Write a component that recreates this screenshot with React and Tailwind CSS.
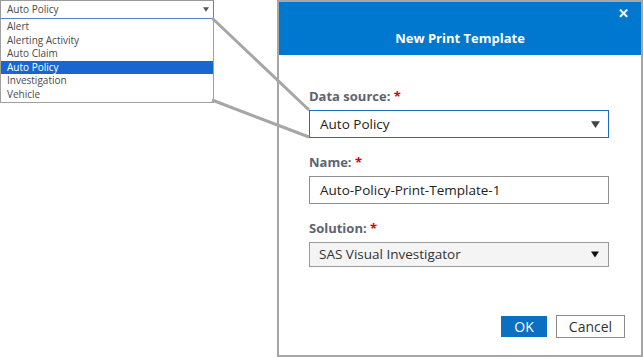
import React from 'react';

const options = ['Alert', 'Alerting Activity', 'Auto Claim', 'Auto Policy', 'Investigation', 'Vehicle'];

function Caret({ className }) {
  return (
    <svg width="8" height="6" viewBox="0 0 8 6" className={className}>
      <path d="M0 0 L8 0 L4 6 Z" fill="currentColor" />
    </svg>
  );
}

function Label({ children }) {
  return (
    <div className="text-[13px] font-bold text-[#5d6470] leading-none mb-[7px]">
      {children} <span className="text-[#d0021b]">*</span>
    </div>
  );
}

export default function App() {
  const selected = 'Auto Policy';
  return (
    <div
      className="relative w-[643px] h-[357px] bg-white flex overflow-hidden"
      style={{ fontFamily: '"Open Sans", "Noto Sans", sans-serif' }}
    >
      {/* dropdown preview */}
      <div className="w-[214px] text-[10px] text-[#4a4a4a]">
        <div className="h-[19px] border border-[#9a9a9a] border-b-[#4f86c6] border-r-[#4f86c6] flex items-center justify-between pl-[6px] pr-[4px]">
          <span>Auto Policy</span>
          <Caret className="text-[#555] w-[6px] h-[5px]" />
        </div>
        <div className="border border-t-0 border-[#a0a0a0] py-[1px]">
          {options.map((o) => (
            <div
              key={o}
              className={
                o === selected
                  ? 'h-[13.5px] leading-[13.5px] px-[6px] bg-[#1a66cf] text-white'
                  : 'h-[13.5px] leading-[13.5px] px-[6px]'
              }
            >
              {o}
            </div>
          ))}
        </div>
      </div>

      <div className="w-[63px]" />

      {/* dialog */}
      <div className="w-[366px] h-[357px] border-2 border-[#a6a6a6] flex flex-col">
        <div className="h-[53px] bg-[#0178d0] relative flex items-end justify-center pb-[7px]">
          <span className="text-white font-bold text-[13px]">New Print Template</span>
          <span className="absolute right-[12px] top-[5px] text-white font-bold text-[13px] leading-none">✕</span>
        </div>
        <div className="flex-1 pl-[30px] pr-[32px] pt-[35px] flex flex-col">
          <Label>Data source:</Label>
          <div className="h-[28px] border border-[#1f6cc4] flex items-center justify-between pl-[10px] pr-[8px] text-[13.5px] text-[#222]">
            <span>Auto Policy</span>
            <Caret className="text-[#444] w-[9px] h-[7px]" />
          </div>
          <div className="h-[18px]" />
          <Label>Name:</Label>
          <div className="h-[28px] border border-[#8f8f8f] flex items-center pl-[10px] text-[13.5px] text-[#222]">
            Auto-Policy-Print-Template-1
          </div>
          <div className="h-[18px]" />
          <Label>Solution:</Label>
          <div className="h-[25px] border border-[#9a9a9a] bg-[#f4f4f4] flex items-center justify-between pl-[9px] pr-[9px] text-[13.5px] text-[#333]">
            <span>SAS Visual Investigator</span>
            <Caret className="text-[#111] w-[8px] h-[7px]" />
          </div>
          <div className="flex-1" />
          <div className="flex justify-end gap-[9px] mb-[17px] -mr-[16px]">
            <div className="w-[46px] h-[21px] bg-[#0b6fc2] text-white text-[14px] flex items-center justify-center">OK</div>
            <div className="w-[69px] h-[23px] -mt-[1px] border border-[#8a8a8a] text-[#333] text-[14px] flex items-center justify-center">Cancel</div>
          </div>
        </div>
      </div>

      {/* connector lines */}
      <svg className="absolute inset-0 pointer-events-none" width="643" height="357">
        <line x1="212" y1="18" x2="309" y2="110" stroke="#a6a6a6" strokeWidth="3" />
        <line x1="212" y1="100" x2="309" y2="137" stroke="#a6a6a6" strokeWidth="3" />
      </svg>
    </div>
  );
}
